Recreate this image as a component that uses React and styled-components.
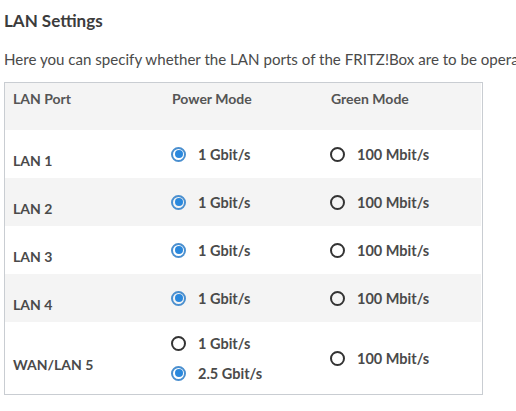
import React from "react";
import styled, { createGlobalStyle } from "styled-components";

const Global = createGlobalStyle`
  html, body { margin: 0; padding: 0; background: #fff; }
  body { font-family: "Lato", "Open Sans", sans-serif; color: #4a4a4a; }
`;

const Page = styled.div`
  padding: 10px 4px 0 4px;
  width: 516px;
  box-sizing: border-box;
  overflow: hidden;
`;

const Title = styled.h2`
  margin: 0;
  font-size: 17px;
  line-height: 22px;
  font-weight: 700;
  color: #3c3c3c;
`;

const Intro = styled.p`
  margin: 17px 0 0 0;
  font-size: 15.1px;
  line-height: 20px;
  color: #4a4a4a;
  white-space: nowrap;
`;

const Table = styled.div`
  margin-top: 13px;
  width: 479px;
  box-sizing: border-box;
  border: 1px solid #c9cdd2;
  padding: 0 1px 0 0;
  background: #fff;
`;

const Row = styled.div`
  display: grid;
  grid-template-columns: 159px 159px 1fr;
  align-items: center;
  height: ${(p) => p.$h}px;
  background: ${(p) => (p.$shade ? "#f4f4f4" : "#fff")};
`;

const HeadRow = styled(Row)`
  align-items: start;
  padding-top: 8px;
  box-sizing: border-box;
`;

const HeadCell = styled.div`
  padding-left: 8px;
  font-size: 14px;
  line-height: 16px;
  font-weight: 700;
  color: #555;
`;

const PortCell = styled.div`
  padding: 14px 0 0 8px;
  font-size: 14px;
  line-height: 18px;
  font-weight: 700;
  color: #4a4a4a;
`;

const OptionCell = styled.div`
  padding-left: 7px;
  display: flex;
  flex-direction: column;
  gap: 12px;
`;

const Option = styled.label`
  display: flex;
  align-items: center;
  height: 18px;
  font-size: 14.5px;
  font-weight: 700;
  color: #4a4a4a;
`;

const Circle = styled.span`
  width: 15px;
  height: 15px;
  box-sizing: border-box;
  border-radius: 50%;
  border: 2px solid ${(p) => (p.$on ? "#4a8fcf" : "#333")};
  display: flex;
  align-items: center;
  justify-content: center;
  margin-right: 12px;
  flex: none;
  &::after {
    content: "";
    display: ${(p) => (p.$on ? "block" : "none")};
    width: 8px;
    height: 8px;
    border-radius: 50%;
    background: #2a88dd;
  }
`;

const Radio = ({ on, children }) => (
  <Option>
    <Circle $on={on} />
    {children}
  </Option>
);

const rows = [
  { port: "LAN 1", power: [["1 Gbit/s", true]] },
  { port: "LAN 2", power: [["1 Gbit/s", true]], shade: true },
  { port: "LAN 3", power: [["1 Gbit/s", true]] },
  { port: "LAN 4", power: [["1 Gbit/s", true]], shade: true },
  {
    port: "WAN/LAN 5",
    power: [
      ["1 Gbit/s", false],
      ["2.5 Gbit/s", true],
    ],
    h: 72,
  },
];

export default function App() {
  return (
    <Page>
      <Global />
      <Title>LAN Settings</Title>
      <Intro>
        Here you can specify whether the LAN ports of the FRITZ!Box are to be operated in power mode or green mode.
      </Intro>
      <Table>
        <HeadRow $h={47} $shade>
          <HeadCell>LAN Port</HeadCell>
          <HeadCell>Power Mode</HeadCell>
          <HeadCell>Green Mode</HeadCell>
        </HeadRow>
        {rows.map((r) => (
          <Row key={r.port} $h={r.h || 48} $shade={r.shade}>
            <PortCell>{r.port}</PortCell>
            <OptionCell>
              {r.power.map(([t, on]) => (
                <Radio key={t} on={on}>{t}</Radio>
              ))}
            </OptionCell>
            <OptionCell>
              <Radio on={false}>100 Mbit/s</Radio>
            </OptionCell>
          </Row>
        ))}
      </Table>
    </Page>
  );
}
